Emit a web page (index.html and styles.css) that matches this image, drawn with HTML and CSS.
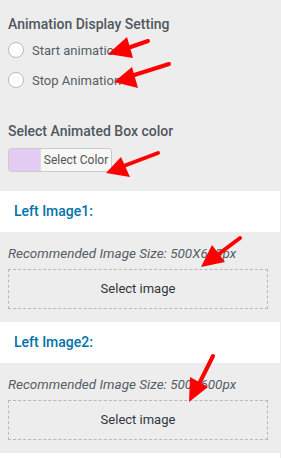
FILE: index.html
```html
<!DOCTYPE html>
<html>
<head>
    <title>Animation Settings</title>
    <link rel="stylesheet" href="styles.css">
</head>
<body>
    <div class="panel">
        <div class="group">
            <h3 class="group-title">Animation Display Setting</h3>
            <label class="radio-row"><span class="radio"></span>Start animation</label>
            <label class="radio-row"><span class="radio"></span>Stop Animation</label>
        </div>

        <div class="group color-group">
            <h3 class="group-title">Select Animated Box color</h3>
            <button type="button" class="color-btn">
                <span class="swatch"></span>
                <span class="color-label">Select Color</span>
            </button>
        </div>

        <div class="section-head">Left Image1:</div>
        <div class="section-body">
            <p class="hint">Recommended Image Size: 500X600px</p>
            <div class="drop">Select image</div>
        </div>

        <div class="section-head">Left Image2:</div>
        <div class="section-body">
            <p class="hint">Recommended Image Size: 500X600px</p>
            <div class="drop">Select image</div>
        </div>

        <div class="section-head"></div>

        <!-- annotation arrows -->
        <svg class="marks" width="281" height="458" viewBox="0 0 281 458">
            <g stroke="#ff0000" stroke-width="4" stroke-linecap="round">
                <line x1="148" y1="41" x2="122" y2="50"/>
                <line x1="169" y1="64" x2="128" y2="77"/>
                <line x1="158" y1="153" x2="121" y2="167"/>
                <line x1="240" y1="238" x2="216" y2="256"/>
                <line x1="213" y1="356" x2="200" y2="382"/>
            </g>
            <g fill="#ff0000">
                <polygon points="108,54 127,37 133,58"/>
                <polygon points="114,82 132,67 138,88"/>
                <polygon points="106,173 121,157 130,177"/>
                <polygon points="201,267 212,245 225,262"/>
                <polygon points="189,402 190,377 208,387"/>
            </g>
        </svg>
    </div>
</body>
</html>
```

FILE: styles.css
```css
body {
    margin: 0;
    background: #ededed;
    font-family: Roboto, "Liberation Sans", sans-serif;
    color: #555d66;
}

.panel {
    position: relative;
    width: 281px;
    height: 458px;
    overflow: hidden;
}

.group {
    padding: 15px 8px 0 8px;
}

.group-title {
    margin: 0 0 9px 0;
    font-size: 14px;
    font-weight: 500;
    color: #50575e;
    line-height: 18px;
}

.radio-row {
    display: flex;
    align-items: center;
    gap: 8px;
    height: 16px;
    margin-bottom: 14px;
    font-size: 13px;
}

.radio {
    width: 14px;
    height: 14px;
    border: 1px solid #b4b9be;
    border-radius: 50%;
    background: #fff;
}

.color-group {
    padding-top: 20px;
    padding-bottom: 19px;
}

.color-group .group-title {
    margin-bottom: 8px;
}

.color-btn {
    display: flex;
    align-items: stretch;
    width: 104px;
    height: 24px;
    padding: 0;
    border: 1px solid #ccc;
    border-radius: 3px;
    background: #f7f7f7;
    overflow: hidden;
    font-family: inherit;
}

.swatch {
    width: 31px;
    background: #e3ccf4;
    border-right: 1px solid #ddd;
}

.color-label {
    flex: 1;
    font-size: 12px;
    line-height: 22px;
    color: #555;
}

.section-head {
    height: 41px;
    margin-right: 1px;
    padding-left: 14px;
    background: #fff;
    color: #0073aa;
    font-size: 14px;
    font-weight: 500;
    line-height: 40px;
}

.section-body {
    height: 90px;
    padding: 0 13px 0 8px;
    box-sizing: border-box;
}

.hint {
    margin: 0;
    height: 37px;
    padding-top: 13px;
    box-sizing: border-box;
    font-size: 13.5px;
    font-style: italic;
    line-height: 16px;
    color: #555d66;
}

.drop {
    height: 40px;
    border: 1px dashed #b4b9be;
    box-sizing: border-box;
    text-align: center;
    font-size: 13px;
    line-height: 38px;
    color: #32373c;
}

.marks {
    position: absolute;
    left: 0;
    top: 0;
}
```
